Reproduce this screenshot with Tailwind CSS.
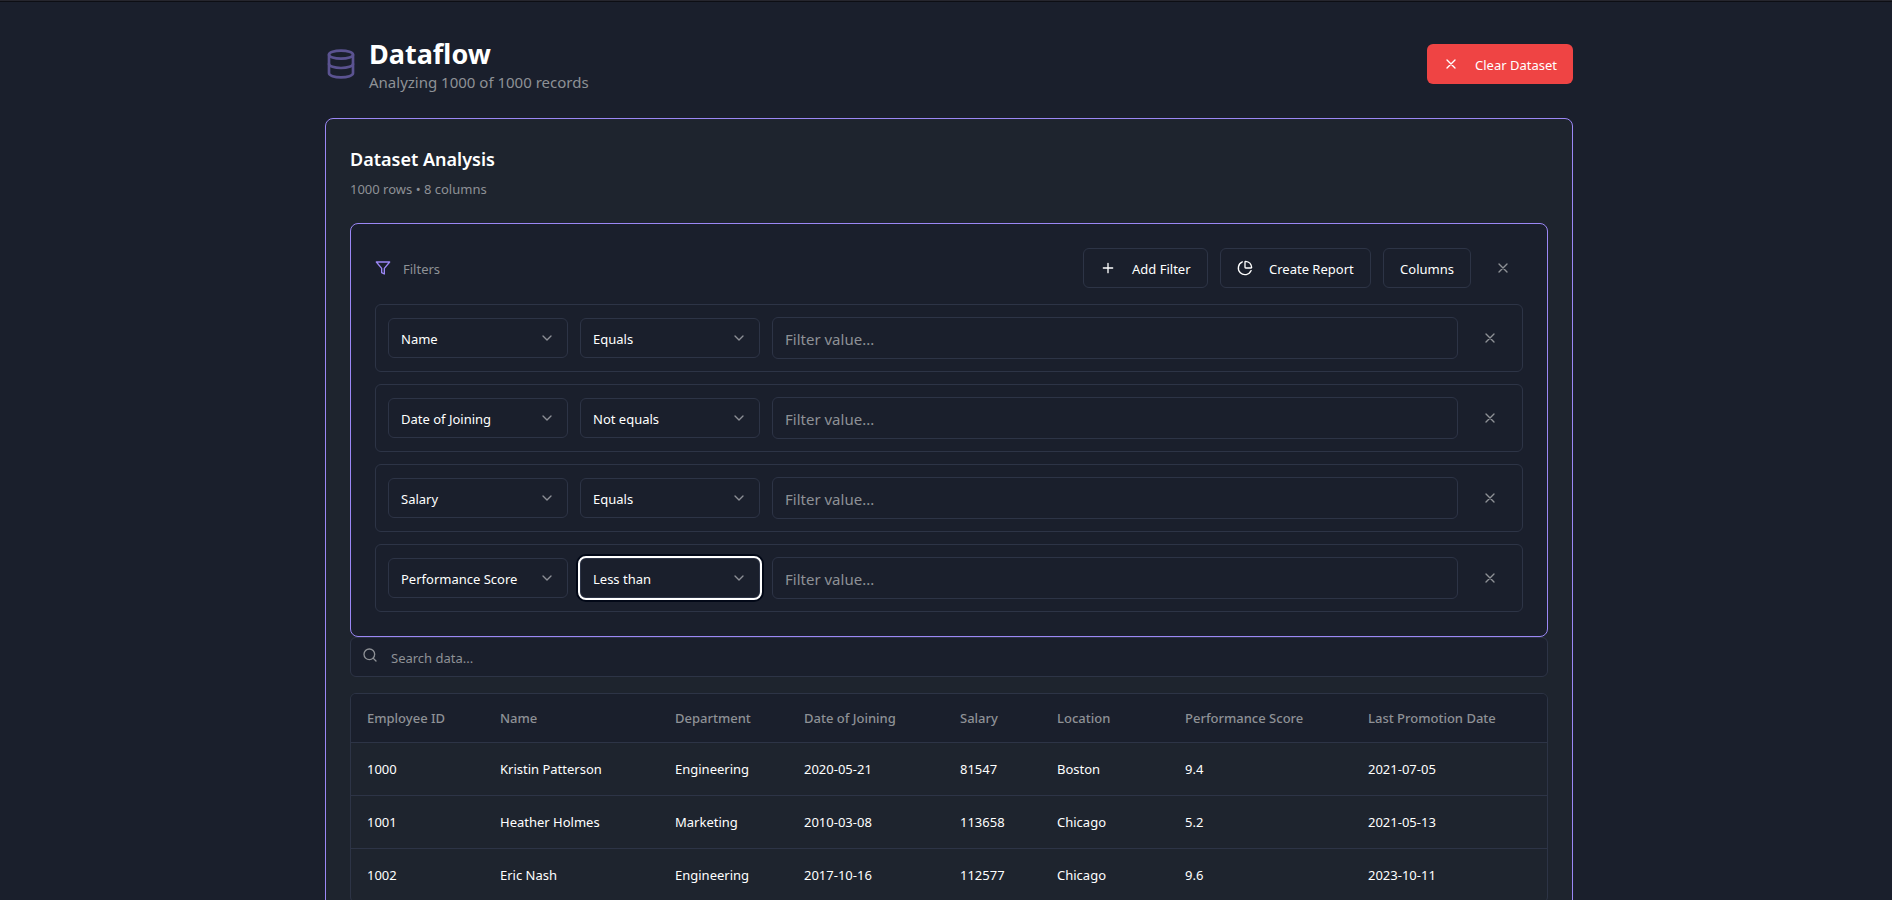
<!DOCTYPE html>
<html lang="en">
<head>
  <meta charset="UTF-8" />
  <meta name="viewport" content="width=device-width, initial-scale=1.0" />
  <title>Dataflow</title>
  <script src="https://cdn.jsdelivr.net/npm/@tailwindcss/browser@4"></script>
</head>
<body class="bg-[#1a1f2c] text-white font-['Noto_Sans',sans-serif] text-[13px] leading-5 min-h-screen overflow-hidden">
  <div class="h-[2px] bg-[#26262e] border-b border-[#0d0e14]"></div>
  <div class="pt-8 pl-[6px]">
    <main class="max-w-[1248px] mx-auto">
      <header class="flex items-center justify-between mb-6">
        <div class="flex items-center gap-3">
          <svg class="size-8 text-[#9b87f5] opacity-50" viewBox="0 0 24 24" fill="none" stroke="currentColor" stroke-width="2" stroke-linecap="round" stroke-linejoin="round"><ellipse cx="12" cy="5" rx="9" ry="3"/><path d="M3 5v14a9 3 0 0 0 18 0V5"/><path d="M3 12a9 3 0 0 0 18 0"/></svg>
          <div>
            <h1 class="pt-1 text-[27px] leading-8 font-bold">Dataflow</h1>
            <p class="text-[15px] leading-6 text-[#8e9196]">Analyzing 1000 of 1000 records</p>
          </div>
        </div>
        <button class="flex items-center gap-4 h-10 w-[146px] pl-4 rounded-md bg-[#ef4444] whitespace-nowrap">
          <svg class="size-4" viewBox="0 0 24 24" fill="none" stroke="currentColor" stroke-width="2" stroke-linecap="round"><path d="M18 6 6 18M6 6l12 12"/></svg>
          <span class="pt-[2px]">Clear Dataset</span>
        </button>
      </header>

      <section class="border border-[#9b87f5] rounded-lg bg-[#1e242e] p-6">
        <h2 class="pt-1 text-lg leading-6 font-semibold">Dataset Analysis</h2>
        <p class="mt-2 mb-6 text-[#8e9196]">1000 rows • 8 columns</p>

        <!-- Filters -->
        <div class="border border-[#9b87f5] rounded-lg bg-[#1a1f2c] p-6">
          <div class="flex items-center justify-between mb-4">
            <div class="flex items-center gap-3 text-[#8e9196]">
              <svg class="size-4 text-[#9b87f5]" viewBox="0 0 24 24" fill="none" stroke="currentColor" stroke-width="2" stroke-linejoin="round"><path d="M22 3H2l8 9.46V19l4 2v-8.54L22 3z"/></svg>
              <span class="pt-[2px]">Filters</span>
            </div>
            <div class="flex gap-3 whitespace-nowrap">
              <button class="flex items-center gap-4 h-10 w-[125px] pl-4 border border-[#2d3446] rounded-md">
                <svg class="size-4" viewBox="0 0 24 24" fill="none" stroke="currentColor" stroke-width="2" stroke-linecap="round"><path d="M5 12h14M12 5v14"/></svg>
                <span class="pt-[2px]">Add Filter</span>
              </button>
              <button class="flex items-center gap-4 h-10 w-[151px] pl-4 border border-[#2d3446] rounded-md">
                <svg class="size-4" viewBox="0 0 24 24" fill="none" stroke="currentColor" stroke-width="2" stroke-linecap="round" stroke-linejoin="round"><path d="M21 12c.552 0 1.005-.449.95-.998a10 10 0 0 0-8.953-8.951c-.55-.055-.998.398-.998.95v8a1 1 0 0 0 1 1z"/><path d="M21.21 15.89A10 10 0 1 1 8 2.83"/></svg>
                <span class="pt-[2px]">Create Report</span>
              </button>
              <button class="h-10 w-[88px] pt-[2px] border border-[#2d3446] rounded-md">Columns</button>
              <button class="flex items-center justify-center size-10 text-[#8e9196]" aria-label="Close filters">
                <svg class="size-4" viewBox="0 0 24 24" fill="none" stroke="currentColor" stroke-width="2" stroke-linecap="round"><path d="M18 6 6 18M6 6l12 12"/></svg>
              </button>
            </div>
          </div>
          <div id="filters" class="space-y-3"></div>
        </div>

        <div class="relative">
          <svg class="absolute left-3 top-[10px] size-4 text-[#8e9196]" viewBox="0 0 24 24" fill="none" stroke="currentColor" stroke-width="2" stroke-linecap="round"><circle cx="11" cy="11" r="8"/><path d="m21 21-4.3-4.3"/></svg>
          <input type="text" aria-label="Search data" placeholder="Search data..." class="block w-full h-10 pl-10 pr-3 pt-[2px] border border-[#2d3446] rounded-md bg-[#1a1f2c] placeholder:text-[#8e9196]" />
        </div>

        <div class="mt-4 border border-[#2d3446] rounded-md overflow-hidden">
          <table class="w-full table-fixed text-left">
            <thead class="bg-[#1a1f2c] text-[#8e9196]">
              <tr class="h-12 border-b border-[#2d3446]">
                <th class="w-[133px] px-4 font-medium">Employee ID</th>
                <th class="w-[175px] px-4 font-medium">Name</th>
                <th class="w-[129px] px-4 font-medium">Department</th>
                <th class="w-[156px] px-4 font-medium">Date of Joining</th>
                <th class="w-[97px] px-4 font-medium">Salary</th>
                <th class="w-[128px] px-4 font-medium">Location</th>
                <th class="w-[183px] px-4 font-medium">Performance Score</th>
                <th class="w-[195px] px-4 font-medium">Last Promotion Date</th>
              </tr>
            </thead>
            <tbody id="rows"></tbody>
          </table>
        </div>
      </section>
    </main>
  </div>

  <script>
    const filters = [
      ["Name", "Equals"],
      ["Date of Joining", "Not equals"],
      ["Salary", "Equals"],
      ["Performance Score", "Less than"],
    ];
    const rows = [
      ["1000", "Kristin Patterson", "Engineering", "2020-05-21", "81547", "Boston", "9.4", "2021-07-05"],
      ["1001", "Heather Holmes", "Marketing", "2010-03-08", "113658", "Chicago", "5.2", "2021-05-13"],
      ["1002", "Eric Nash", "Engineering", "2017-10-16", "112577", "Chicago", "9.6", "2023-10-11"],
    ];

    const select = (value, label, active) => `
      <div class="relative w-[180px] shrink-0">
        <select aria-label="${label}" class="appearance-none block w-full h-10 px-3 pt-[2px] border border-[#2d3446] rounded-md bg-[#1a1f2c] ${active ? "outline-2 outline-white shadow-[0_0_0_4px_#020817]" : ""}">
          <option>${value}</option>
        </select>
        <svg class="absolute right-[13px] top-3 size-4 opacity-50 pointer-events-none" viewBox="0 0 24 24" fill="none" stroke="currentColor" stroke-width="2" stroke-linecap="round" stroke-linejoin="round"><path d="m6 9 6 6 6-6"/></svg>
      </div>`;

    document.getElementById("filters").innerHTML = filters.map(([column, operator], i) => `
      <div class="flex items-center gap-3 p-3 border border-[#2d3446] rounded-md">
        ${select(column, "Column", false)}
        ${select(operator, "Operator", i === 3)}
        <input type="text" aria-label="Filter value" placeholder="Filter value..." class="flex-1 h-[42px] px-3 pt-[2px] text-[15px] border border-[#2d3446] rounded-md bg-[#1a1f2c] placeholder:text-[#8e9196]" />
        <button class="flex items-center justify-center size-10 text-[#8e9196]" aria-label="Remove filter">
          <svg class="size-4" viewBox="0 0 24 24" fill="none" stroke="currentColor" stroke-width="2" stroke-linecap="round"><path d="M18 6 6 18M6 6l12 12"/></svg>
        </button>
      </div>`).join("");

    document.getElementById("rows").innerHTML = rows.map((row) => `
      <tr class="h-[53px] border-b border-[#2d3446]">${row.map((cell) => `<td class="px-4">${cell}</td>`).join("")}</tr>`).join("");
  </script>
</body>
</html>
